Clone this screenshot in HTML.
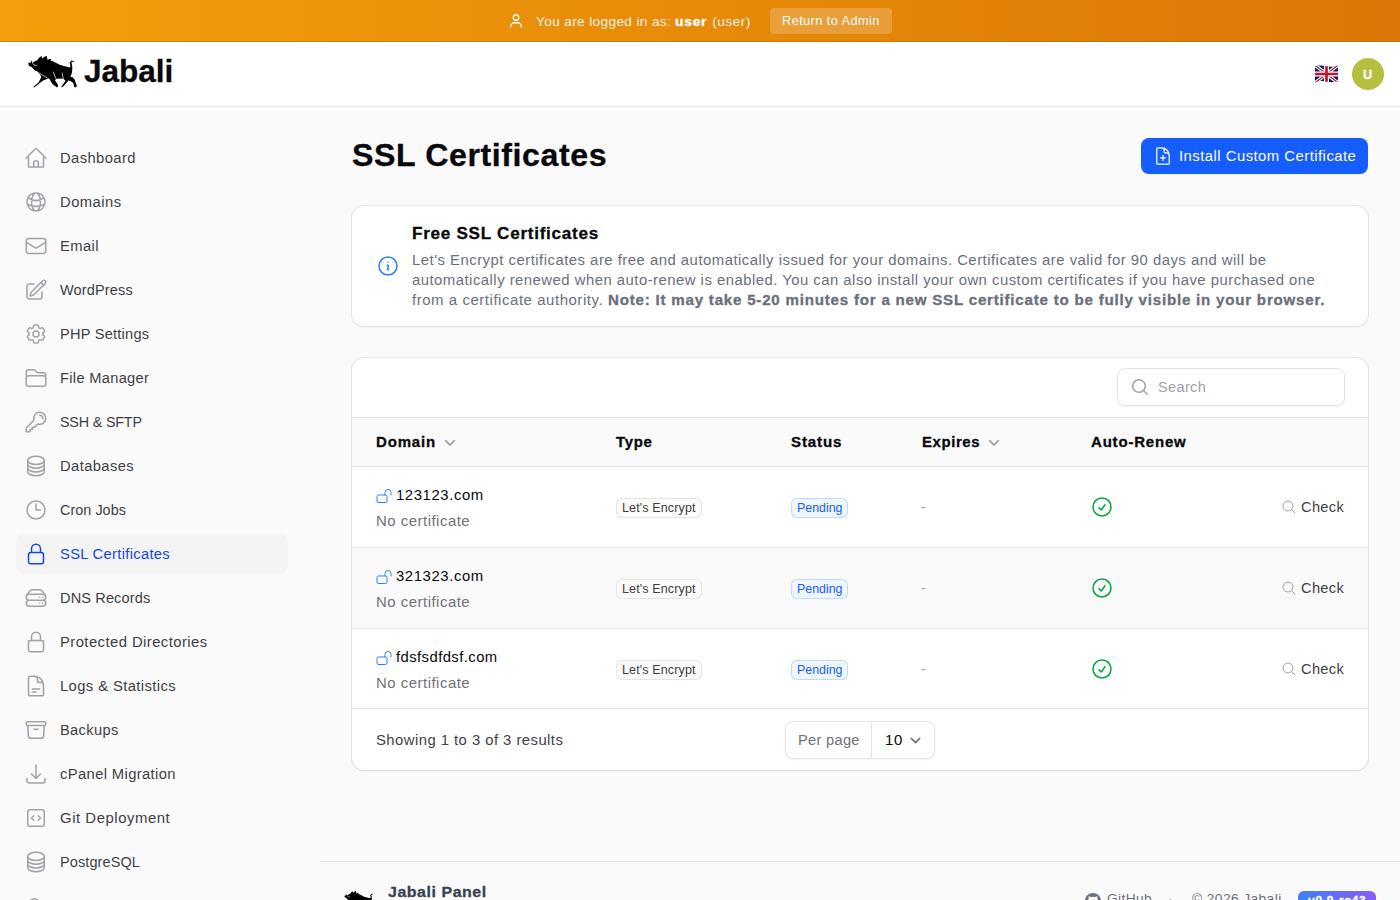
<!DOCTYPE html>
<html><head><meta charset="utf-8"><title>SSL Certificates - Jabali</title>
<style>
*{box-sizing:border-box;margin:0;padding:0}
html,body{width:1400px;height:900px;overflow:hidden}
body{font-family:"Liberation Sans",sans-serif;background:#fafafa;position:relative;color:#09090b;font-size:14px;line-height:20px}
.a{position:absolute;white-space:nowrap}
.tx{white-space:pre;display:inline-block;transform-origin:0 0}
[style*="font-weight:bold"] .tx,.tx[style*="font-weight:bold"]{-webkit-text-stroke:0.3px currentColor}
svg.i{position:absolute;fill:none;stroke:currentColor;stroke-width:1.5;stroke-linecap:round;stroke-linejoin:round}
</style></head>
<body>
<div class="a" style="left:0;top:0;width:1400px;height:42px;background:linear-gradient(90deg,#f59e0b 0%,#d97706 100%);border-bottom:1px solid rgba(180,83,9,.35)">
<svg class="i" viewBox="0 0 16 16" style="left:508px;top:12px;width:16px;height:16px;color:#fff;stroke-width:1.3"><circle cx="8" cy="5.5" r="2.75"/><path d="M2.65 15.25V14.5a3.75 3.75 0 0 1 3.75-3.75h3.2a3.75 3.75 0 0 1 3.75 3.75V15.25"/></svg>
<div class="a" style="left:536px;top:11px;line-height:20px;color:rgba(255,255,255,.92)"><span class="tx" style="font-size:13.39px;letter-spacing:0.326px;transform:scaleX(1.024);margin-right:3.32px">You are logged in as: </span><span class="tx" style="font-size:13.39px;letter-spacing:0.666px;transform:scaleX(1.042);margin-right:1.30px;font-weight:bold;color:#fff">user</span><span class="tx" style="font-size:13.39px;letter-spacing:0.386px;transform:scaleX(1.031);margin-right:1.28px"> (user)</span></div>
<div class="a" style="left:770px;top:8px;width:122px;height:26px;border-radius:4px;background:rgba(255,255,255,.2);color:#fff;line-height:24px;text-align:center"><span class="tx" style="font-size:12.36px;letter-spacing:0.413px;transform:scaleX(1.031);margin-right:2.93px">Return to Admin</span></div>
</div>
<div class="a" style="left:0;top:42px;width:1400px;height:65px;background:#fff;border-bottom:1px solid #e4e4e7">
<svg viewBox="26 54 52 36" style="position:absolute;left:26px;top:12px;width:52px;height:36px"><path fill="#000" d="M28.2 63.1 L31.0 62.5 L31.3 59.9 L32.2 62.2 L33.3 61.9 L37.3 60.2 L39.1 57.8 L41.6 56.0 L42.4 58.7 L43.6 57.2 L46.7 55.8 L47.3 58.6 L47.6 60.2 L48.9 59.0 L51.3 59.2 L50.6 60.6 L53.3 61.4 L57.8 63.8 L59.6 64.7 L69.3 67.4 L70.6 66.2 L69.6 63.0 L71.4 60.6 L74.8 61.4 L71.4 62.2 L72.3 66.6 L72.2 70.7 L71.8 73.3 L70.4 76.9 L72.4 76.9 L74.7 79.6 L75.8 83.1 L76.9 85.8 L75.6 87.6 L74.2 87.1 L73.3 83.1 L70.2 80.9 L68.4 80.4 L64.0 85.8 L61.8 87.6 L61.3 86.7 L64.9 81.8 L65.3 80.4 L63.1 78.4 L56.0 78.7 L55.1 80.4 L57.8 84.4 L58.2 86.2 L57.1 87.6 L52.4 84.0 L49.8 79.6 L48.9 78.2 L43.1 80.4 L37.3 84.9 L34.2 87.6 L33.3 87.1 L38.7 82.2 L41.3 76.9 L40.4 75.1 L36.9 71.6 L35.1 70.7 L31.6 67.1 L28.9 65.8 Z"/><path fill="none" stroke="#fff" stroke-width="0.7" stroke-linecap="round" d="M32.4 62.4 Q33.2 66.2 36.9 65.3 M36.0 71.1 L41.8 74.7 L47.1 77.8 M53.3 72 L55.6 78.2 M62.2 72.9 L63.1 78.2"/></svg>
<div class="a" style="left:84px;top:10px;line-height:40px;font-weight:bold;color:#09090b"><span class="tx" style="font-size:30.90px;letter-spacing:-0.051px;transform:scaleX(1.022);margin-right:1.93px">Jabali</span></div>
<svg class="a" viewBox="0 0 60 46" style="left:1315px;top:23px;width:23px;height:18px"><defs><clipPath id="fc"><path d="M0 4C8 0 16 -1 26 2S46 5 60 1V41C52 45 42 46 32 43S12 40 0 45Z"/></clipPath></defs><g clip-path="url(#fc)"><rect width="60" height="46" fill="#012169"/><path d="M0 0L60 46M60 0L0 46" stroke="#fff" stroke-width="9"/><path d="M0 0L60 46M60 0L0 46" stroke="#C8102E" stroke-width="3"/><path d="M30 0v46M0 23h60" stroke="#fff" stroke-width="13"/><path d="M30 0v46M0 23h60" stroke="#C8102E" stroke-width="7"/></g></svg>
<div class="a" style="left:1352px;top:16px;width:32px;height:32px;border-radius:50%;background:#b5c040;color:#fff;font-weight:bold;line-height:32px;text-align:center"><span class="tx" style="font-size:12.36px;letter-spacing:0.554px;transform:scaleX(1.027);margin-right:0.26px">U</span></div>
</div>
<div class="a" style="left:16px;top:534px;width:272px;height:40px;border-radius:8px;background:#f4f4f5"></div>
<svg class="i" viewBox="0 0 24 24" style="left:24px;top:146px;width:24px;height:24px;color:#a1a1aa"><path d="m2.25 12 8.954-8.955c.44-.439 1.152-.439 1.591 0L21.75 12M4.5 9.75v10.125c0 .621.504 1.125 1.125 1.125H9.75v-4.875c0-.621.504-1.125 1.125-1.125h2.25c.621 0 1.125.504 1.125 1.125V21h4.125c.621 0 1.125-.504 1.125-1.125V9.75M8.25 21h8.25"/></svg>
<div class="a" style="left:60px;top:148px;line-height:20px;color:#3f3f46"><span class="tx" style="font-size:14.42px;letter-spacing:0.417px;transform:scaleX(1.023);margin-right:1.73px">Dashboard</span></div>
<svg class="i" viewBox="0 0 24 24" style="left:24px;top:190px;width:24px;height:24px;color:#a1a1aa"><path d="M12 21a9.004 9.004 0 0 0 8.716-6.747M12 21a9.004 9.004 0 0 1-8.716-6.747M12 21c2.485 0 4.5-4.03 4.5-9S14.485 3 12 3m0 18c-2.485 0-4.5-4.03-4.5-9S9.515 3 12 3m0 0a8.997 8.997 0 0 1 7.843 4.582M12 3a8.997 8.997 0 0 0-7.843 4.582m15.686 0A11.953 11.953 0 0 1 12 10.5c-2.998 0-5.74-1.1-7.843-2.918m15.686 0A8.959 8.959 0 0 1 21 12c0 .778-.099 1.533-.284 2.253m0 0A17.919 17.919 0 0 1 12 16.5c-3.162 0-6.133-.815-8.716-2.247m0 0A9.015 9.015 0 0 1 3 12c0-1.605.42-3.113 1.157-4.418"/></svg>
<div class="a" style="left:60px;top:192px;line-height:20px;color:#3f3f46"><span class="tx" style="font-size:14.42px;letter-spacing:0.465px;transform:scaleX(1.025);margin-right:1.51px">Domains</span></div>
<svg class="i" viewBox="0 0 24 24" style="left:24px;top:234px;width:24px;height:24px;color:#a1a1aa"><path d="M21.75 6.75v10.5a2.25 2.25 0 0 1-2.25 2.25h-15a2.25 2.25 0 0 1-2.25-2.25V6.75m19.5 0A2.25 2.25 0 0 0 19.5 4.5h-15a2.25 2.25 0 0 0-2.25 2.25m19.5 0v.243a2.25 2.25 0 0 1-1.07 1.916l-7.5 4.615a2.25 2.25 0 0 1-2.36 0L3.32 8.91a2.25 2.25 0 0 1-1.07-1.916V6.75"/></svg>
<div class="a" style="left:60px;top:236px;line-height:20px;color:#3f3f46"><span class="tx" style="font-size:14.42px;letter-spacing:0.385px;transform:scaleX(1.023);margin-right:0.89px">Email</span></div>
<svg class="i" viewBox="0 0 24 24" style="left:24px;top:278px;width:24px;height:24px;color:#a1a1aa"><path d="m16.862 4.487 1.687-1.688a1.875 1.875 0 1 1 2.652 2.652L10.582 16.07a4.5 4.5 0 0 1-1.897 1.13L6 18l.8-2.685a4.5 4.5 0 0 1 1.13-1.897l8.932-8.931Zm0 0L19.5 7.125M18 14v4.75A2.25 2.25 0 0 1 15.75 21H5.25A2.25 2.25 0 0 1 3 18.75V8.25A2.25 2.25 0 0 1 5.25 6H10"/></svg>
<div class="a" style="left:60px;top:280px;line-height:20px;color:#3f3f46"><span class="tx" style="font-size:14.42px;letter-spacing:0.143px;transform:scaleX(1.008);margin-right:0.57px">WordPress</span></div>
<svg class="i" viewBox="0 0 24 24" style="left:24px;top:322px;width:24px;height:24px;color:#a1a1aa"><path d="M9.594 3.94c.09-.542.56-.94 1.11-.94h2.593c.55 0 1.02.398 1.11.94l.213 1.281c.063.374.313.686.645.87.074.04.147.083.22.127.325.196.72.257 1.075.124l1.217-.456a1.125 1.125 0 0 1 1.37.49l1.296 2.247a1.125 1.125 0 0 1-.26 1.431l-1.003.827c-.293.241-.438.613-.43.992a7.723 7.723 0 0 1 0 .255c-.008.378.137.75.43.991l1.004.827c.424.35.534.955.26 1.43l-1.298 2.247a1.125 1.125 0 0 1-1.369.491l-1.217-.456c-.355-.133-.75-.072-1.076.124a6.47 6.47 0 0 1-.22.128c-.331.183-.581.495-.644.869l-.213 1.281c-.09.543-.56.94-1.11.94h-2.594c-.55 0-1.019-.398-1.11-.94l-.213-1.281c-.062-.374-.312-.686-.644-.87a6.52 6.52 0 0 1-.22-.127c-.325-.196-.72-.257-1.076-.124l-1.217.456a1.125 1.125 0 0 1-1.369-.49l-1.297-2.247a1.125 1.125 0 0 1 .26-1.431l1.004-.827c.292-.24.437-.613.43-.991a6.932 6.932 0 0 1 0-.255c.007-.38-.138-.751-.43-.992l-1.004-.827a1.125 1.125 0 0 1-.26-1.43l1.297-2.247a1.125 1.125 0 0 1 1.37-.491l1.216.456c.356.133.751.072 1.076-.124.072-.044.146-.086.22-.128.332-.183.582-.495.644-.869l.214-1.28Z"/><path d="M15 12a3 3 0 1 1-6 0 3 3 0 0 1 6 0Z"/></svg>
<div class="a" style="left:60px;top:324px;line-height:20px;color:#3f3f46"><span class="tx" style="font-size:14.42px;letter-spacing:0.223px;transform:scaleX(1.014);margin-right:1.20px">PHP Settings</span></div>
<svg class="i" viewBox="0 0 24 24" style="left:24px;top:366px;width:24px;height:24px;color:#a1a1aa"><path d="M2.25 12.75V12A2.25 2.25 0 0 1 4.5 9.75h15A2.25 2.25 0 0 1 21.75 12v.75m-8.69-6.44-2.12-2.12a1.5 1.5 0 0 0-1.061-.44H4.5A2.25 2.25 0 0 0 2.25 6v12a2.25 2.25 0 0 0 2.25 2.25h15A2.25 2.25 0 0 0 21.75 18V9a2.25 2.25 0 0 0-2.25-2.25h-5.379a1.5 1.5 0 0 1-1.06-.44Z"/></svg>
<div class="a" style="left:60px;top:368px;line-height:20px;color:#3f3f46"><span class="tx" style="font-size:14.42px;letter-spacing:0.296px;transform:scaleX(1.018);margin-right:1.62px">File Manager</span></div>
<svg class="i" viewBox="0 0 24 24" style="left:24px;top:410px;width:24px;height:24px;color:#a1a1aa"><path d="M15.75 5.25a3 3 0 0 1 3 3m3 0a6 6 0 0 1-7.029 5.912c-.563-.097-1.159.026-1.563.43L10.5 17.25H8.25v2.25H6v2.25H2.25v-2.818c0-.597.237-1.17.659-1.591l6.499-6.499c.404-.404.527-1 .43-1.563A6 6 0 1 1 21.75 8.25Z"/></svg>
<div class="a" style="left:60px;top:412px;line-height:20px;color:#3f3f46"><span class="tx" style="font-size:14.42px;letter-spacing:-0.159px;transform:scaleX(0.992);margin-right:-0.66px">SSH &amp; SFTP</span></div>
<svg class="i" viewBox="0 0 24 24" style="left:24px;top:454px;width:24px;height:24px;color:#a1a1aa"><path d="M20.25 6.375c0 2.278-3.694 4.125-8.25 4.125S3.75 8.653 3.75 6.375m16.5 0c0-2.278-3.694-4.125-8.25-4.125S3.75 4.097 3.75 6.375m16.5 0v11.25c0 2.278-3.694 4.125-8.25 4.125s-8.25-1.847-8.25-4.125V6.375m16.5 0v3.75m-16.5-3.75v3.75m16.5 0v3.75C20.25 16.153 16.556 18 12 18s-8.25-1.847-8.25-4.125v-3.75m16.5 0c0 2.278-3.694 4.125-8.25 4.125s-8.25-1.847-8.25-4.125"/></svg>
<div class="a" style="left:60px;top:456px;line-height:20px;color:#3f3f46"><span class="tx" style="font-size:14.42px;letter-spacing:0.398px;transform:scaleX(1.023);margin-right:1.65px">Databases</span></div>
<svg class="i" viewBox="0 0 24 24" style="left:24px;top:498px;width:24px;height:24px;color:#a1a1aa"><path d="M12 6v6h4.5m4.5 0a9 9 0 1 1-18 0 9 9 0 0 1 18 0Z"/></svg>
<div class="a" style="left:60px;top:500px;line-height:20px;color:#3f3f46"><span class="tx" style="font-size:14.42px;letter-spacing:0.025px;transform:scaleX(1.001);margin-right:0.10px">Cron Jobs</span></div>
<svg class="i" viewBox="0 0 24 24" style="left:24px;top:542px;width:24px;height:24px;color:#1447e6"><path d="M16.5 10.5V6.75a4.5 4.5 0 1 0-9 0v3.75m-.75 11.25h10.5a2.25 2.25 0 0 0 2.25-2.25v-6.75a2.25 2.25 0 0 0-2.25-2.25H6.75a2.25 2.25 0 0 0-2.25 2.25v6.75a2.25 2.25 0 0 0 2.25 2.25Z"/></svg>
<div class="a" style="left:60px;top:544px;line-height:20px;color:#1447e6"><span class="tx" style="font-size:14.42px;letter-spacing:0.313px;transform:scaleX(1.021);margin-right:2.30px">SSL Certificates</span></div>
<svg class="i" viewBox="0 0 24 24" style="left:24px;top:586px;width:24px;height:24px;color:#a1a1aa"><path d="M5.25 14.25h13.5m-13.5 0a3 3 0 0 1-3-3m3 3a3 3 0 1 0 0 6h13.5a3 3 0 1 0 0-6m-16.5-3a3 3 0 0 1 3-3h13.5a3 3 0 0 1 3 3m-19.5 0a4.5 4.5 0 0 1 .9-2.7L5.737 5.1a3.375 3.375 0 0 1 2.7-1.35h7.126c1.062 0 2.062.5 2.7 1.35l2.587 3.45a4.5 4.5 0 0 1 .9 2.7m0 0a3 3 0 0 1-3 3m0 3h.008v.008h-.008v-.008Zm0-6h.008v.008h-.008v-.008Zm-3 6h.008v.008h-.008v-.008Zm0-6h.008v.008h-.008v-.008Z"/></svg>
<div class="a" style="left:60px;top:588px;line-height:20px;color:#3f3f46"><span class="tx" style="font-size:14.42px;letter-spacing:0.139px;transform:scaleX(1.008);margin-right:0.67px">DNS Records</span></div>
<svg class="i" viewBox="0 0 24 24" style="left:24px;top:630px;width:24px;height:24px;color:#a1a1aa"><path d="M16.5 10.5V6.75a4.5 4.5 0 1 0-9 0v3.75m-.75 11.25h10.5a2.25 2.25 0 0 0 2.25-2.25v-6.75a2.25 2.25 0 0 0-2.25-2.25H6.75a2.25 2.25 0 0 0-2.25 2.25v6.75a2.25 2.25 0 0 0 2.25 2.25Z"/></svg>
<div class="a" style="left:60px;top:632px;line-height:20px;color:#3f3f46"><span class="tx" style="font-size:14.42px;letter-spacing:0.421px;transform:scaleX(1.029);margin-right:4.15px">Protected Directories</span></div>
<svg class="i" viewBox="0 0 24 24" style="left:24px;top:674px;width:24px;height:24px;color:#a1a1aa"><path d="M19.5 14.25v-2.625a3.375 3.375 0 0 0-3.375-3.375h-1.5A1.125 1.125 0 0 1 13.5 7.125v-1.5a3.375 3.375 0 0 0-3.375-3.375H8.25m0 12.75h7.5m-7.5 3H12M10.5 2.25H5.625c-.621 0-1.125.504-1.125 1.125v17.25c0 .621.504 1.125 1.125 1.125h12.75c.621 0 1.125-.504 1.125-1.125V11.25a9 9 0 0 0-9-9Z"/></svg>
<div class="a" style="left:60px;top:676px;line-height:20px;color:#3f3f46"><span class="tx" style="font-size:14.42px;letter-spacing:0.386px;transform:scaleX(1.027);margin-right:3.07px">Logs &amp; Statistics</span></div>
<svg class="i" viewBox="0 0 24 24" style="left:24px;top:718px;width:24px;height:24px;color:#a1a1aa"><path d="m20.25 7.5-.625 10.632a2.25 2.25 0 0 1-2.247 2.118H6.622a2.25 2.25 0 0 1-2.247-2.118L3.75 7.5M10 11.25h4M3.375 7.5h17.25c.621 0 1.125-.504 1.125-1.125v-1.5c0-.621-.504-1.125-1.125-1.125H3.375c-.621 0-1.125.504-1.125 1.125v1.5c0 .621.504 1.125 1.125 1.125Z"/></svg>
<div class="a" style="left:60px;top:720px;line-height:20px;color:#3f3f46"><span class="tx" style="font-size:14.42px;letter-spacing:0.330px;transform:scaleX(1.018);margin-right:1.05px">Backups</span></div>
<svg class="i" viewBox="0 0 24 24" style="left:24px;top:762px;width:24px;height:24px;color:#a1a1aa"><path d="M3 16.5v2.25A2.25 2.25 0 0 0 5.25 21h13.5A2.25 2.25 0 0 0 21 18.75V16.5M16.5 12 12 16.5m0 0L7.5 12m4.5 4.5V3"/></svg>
<div class="a" style="left:60px;top:764px;line-height:20px;color:#3f3f46"><span class="tx" style="font-size:14.42px;letter-spacing:0.368px;transform:scaleX(1.024);margin-right:2.73px">cPanel Migration</span></div>
<svg class="i" viewBox="0 0 24 24" style="left:24px;top:806px;width:24px;height:24px;color:#a1a1aa"><path d="M14.25 9.75 16.5 12l-2.25 2.25m-4.5 0L7.5 12l2.25-2.25M6 20.25h12A2.25 2.25 0 0 0 20.25 18V6A2.25 2.25 0 0 0 18 3.75H6A2.25 2.25 0 0 0 3.75 6v12A2.25 2.25 0 0 0 6 20.25Z"/></svg>
<div class="a" style="left:60px;top:808px;line-height:20px;color:#3f3f46"><span class="tx" style="font-size:14.42px;letter-spacing:0.533px;transform:scaleX(1.033);margin-right:3.55px">Git Deployment</span></div>
<svg class="i" viewBox="0 0 24 24" style="left:24px;top:850px;width:24px;height:24px;color:#a1a1aa"><path d="M20.25 6.375c0 2.278-3.694 4.125-8.25 4.125S3.75 8.653 3.75 6.375m16.5 0c0-2.278-3.694-4.125-8.25-4.125S3.75 4.097 3.75 6.375m16.5 0v11.25c0 2.278-3.694 4.125-8.25 4.125s-8.25-1.847-8.25-4.125V6.375m16.5 0v3.75m-16.5-3.75v3.75m16.5 0v3.75C20.25 16.153 16.556 18 12 18s-8.25-1.847-8.25-4.125v-3.75m16.5 0c0 2.278-3.694 4.125-8.25 4.125s-8.25-1.847-8.25-4.125"/></svg>
<div class="a" style="left:60px;top:852px;line-height:20px;color:#3f3f46"><span class="tx" style="font-size:14.42px;letter-spacing:0.102px;transform:scaleX(1.006);margin-right:0.45px">PostgreSQL</span></div>
<svg class="i" viewBox="0 0 24 24" style="left:24px;top:894px;width:24px;height:24px;color:#a1a1aa"><circle cx="10.3" cy="9.5" r="4.85"/></svg>
<div class="a" style="left:60px;top:896px;line-height:20px;color:#3f3f46"><span class="tx" style="font-size:14.42px;letter-spacing:0.455px;transform:scaleX(1.031);margin-right:1.72px">Settings</span></div>
<div class="a" style="left:352px;top:138px;line-height:36px;font-weight:bold;color:#09090b"><span class="tx" style="font-size:30.90px;letter-spacing:0.543px;transform:scaleX(1.041);margin-right:10.08px">SSL Certificates</span></div>
<div class="a" style="left:1141px;top:138px;width:227px;height:36px;border-radius:8px;background:#155dfc;box-shadow:0 1px 2px rgba(0,0,0,.05)"><svg class="i" viewBox="0 0 24 24" style="left:12px;top:8px;width:20px;height:20px;color:#fff"><path d="M19.5 14.25v-2.625a3.375 3.375 0 0 0-3.375-3.375h-1.5A1.125 1.125 0 0 1 13.5 7.125v-1.5a3.375 3.375 0 0 0-3.375-3.375H8.25m3.75 9v6m3-3H9m1.5-12H5.625c-.621 0-1.125.504-1.125 1.125v17.25c0 .621.504 1.125 1.125 1.125h12.75c.621 0 1.125-.504 1.125-1.125V11.25a9 9 0 0 0-9-9Z"/></svg><div class="a" style="left:38px;top:8px;line-height:20px;color:#fff"><span class="tx" style="font-size:14.42px;letter-spacing:0.451px;transform:scaleX(1.032);margin-right:5.56px">Install Custom Certificate</span></div></div>
<div class="a" style="left:352px;top:206px;width:1016px;height:120px;border-radius:12px;background:#fff;box-shadow:0 0 0 1px rgba(9,9,11,.07),0 1px 3px rgba(0,0,0,.06)">
<svg class="i" viewBox="0 0 24 24" style="left:24px;top:48px;width:24px;height:24px;color:#2b7fff"><path d="m11.25 11.25.041-.02a.75.75 0 0 1 1.063.852l-.708 2.836a.75.75 0 0 0 1.063.853l.041-.021M21 12a9 9 0 1 1-18 0 9 9 0 0 1 18 0Zm-9-3.75h.008v.008H12V8.25Z"/></svg>
<div class="a" style="left:60px;top:15px;line-height:24px;font-weight:bold;color:#09090b"><span class="tx" style="font-size:16.48px;letter-spacing:0.692px;transform:scaleX(1.039);margin-right:7.04px">Free SSL Certificates</span></div>
<div class="a" style="left:60px;top:44px;line-height:20px;color:#6b6f7c"><span class="tx" style="font-size:14.42px;letter-spacing:0.466px;transform:scaleX(1.034);margin-right:27.73px">Let's Encrypt certificates are free and automatically issued for your domains. Certificates are valid for 90 days and will be</span></div>
<div class="a" style="left:60px;top:64px;line-height:20px;color:#6b6f7c"><span class="tx" style="font-size:14.42px;letter-spacing:0.468px;transform:scaleX(1.032);margin-right:27.74px">automatically renewed when auto-renew is enabled. You can also install your own custom certificates if you have purchased one</span></div>
<div class="a" style="left:60px;top:84px;line-height:20px;color:#6b6f7c"><span class="tx" style="font-size:14.42px;letter-spacing:0.520px;transform:scaleX(1.040);margin-right:7.58px">from a certificate authority. </span><span class="tx" style="font-size:14.42px;letter-spacing:0.737px;transform:scaleX(1.050);margin-right:34.27px;font-weight:bold;color:#6b6f7c">Note: It may take 5-20 minutes for a new SSL certificate to be fully visible in your browser.</span></div>
</div>
<div class="a" style="left:352px;top:358px;width:1016px;height:412px;border-radius:12px;background:#fff;box-shadow:0 0 0 1px rgba(9,9,11,.07),0 1px 3px rgba(0,0,0,.06);overflow:hidden">
<div class="a" style="left:765px;top:10px;width:228px;height:38px;border-radius:8px;border:1px solid #e4e4e7;background:#fff;box-shadow:0 1px 2px rgba(0,0,0,.05)"><svg class="a" viewBox="0 0 20 20" style="left:12px;top:8px;width:20px;height:20px"><path fill="#a1a1aa" fill-rule="evenodd" d="M9 3.5a5.5 5.5 0 1 0 0 11 5.5 5.5 0 0 0 0-11ZM2 9a7 7 0 1 1 12.452 4.391l3.328 3.329a.75.75 0 1 1-1.06 1.06l-3.329-3.328A7 7 0 0 1 2 9Z"/></svg><div class="a" style="left:40px;top:8px;line-height:20px;color:#a1a1aa"><span class="tx" style="font-size:14.42px;letter-spacing:0.282px;transform:scaleX(1.016);margin-right:0.76px">Search</span></div></div>
<div class="a" style="left:0;top:59px;width:1016px;height:50px;background:#fafafa;border-top:1px solid #e4e4e7;border-bottom:1px solid #e4e4e7"></div>
<div class="a" style="left:24px;top:74px;line-height:20px;font-weight:bold;color:#09090b"><span class="tx" style="font-size:14.42px;letter-spacing:0.809px;transform:scaleX(1.041);margin-right:2.36px">Domain</span></div>
<svg class="a" viewBox="0 0 20 20" style="left:87.5px;top:74px;width:20px;height:20px"><path fill="#8b8f9c" d="M5.22 8.22a.75.75 0 0 1 1.06 0L10 11.94l3.72-3.72a.75.75 0 1 1 1.06 1.06l-4.25 4.25a.75.75 0 0 1-1.06 0L5.22 9.28a.75.75 0 0 1 0-1.06Z"/></svg>
<div class="a" style="left:264px;top:74px;line-height:20px;font-weight:bold;color:#09090b"><span class="tx" style="font-size:14.42px;letter-spacing:0.670px;transform:scaleX(1.037);margin-right:1.29px">Type</span></div>
<div class="a" style="left:439px;top:74px;line-height:20px;font-weight:bold;color:#09090b"><span class="tx" style="font-size:14.42px;letter-spacing:0.799px;transform:scaleX(1.049);margin-right:2.39px">Status</span></div>
<div class="a" style="left:570px;top:74px;line-height:20px;font-weight:bold;color:#09090b"><span class="tx" style="font-size:14.42px;letter-spacing:0.589px;transform:scaleX(1.035);margin-right:1.97px">Expires</span></div>
<svg class="a" viewBox="0 0 20 20" style="left:632px;top:74px;width:20px;height:20px"><path fill="#8b8f9c" d="M5.22 8.22a.75.75 0 0 1 1.06 0L10 11.94l3.72-3.72a.75.75 0 1 1 1.06 1.06l-4.25 4.25a.75.75 0 0 1-1.06 0L5.22 9.28a.75.75 0 0 1 0-1.06Z"/></svg>
<div class="a" style="left:739px;top:74px;line-height:20px;font-weight:bold;color:#09090b"><span class="tx" style="font-size:14.42px;letter-spacing:0.776px;transform:scaleX(1.041);margin-right:3.78px">Auto-Renew</span></div>
<svg class="i" viewBox="0 0 24 24" style="left:24px;top:130px;width:16px;height:16px;color:#2b7fff"><path d="M13.5 10.5V6.75a4.5 4.5 0 1 1 9 0v3.75M3.75 21.75h10.5a2.25 2.25 0 0 0 2.25-2.25v-6.75a2.25 2.25 0 0 0-2.25-2.25H3.75a2.25 2.25 0 0 0-2.25 2.25v6.75a2.25 2.25 0 0 0 2.25 2.25Z"/></svg>
<div class="a" style="left:44px;top:127px;line-height:20px;color:#09090b"><span class="tx" style="font-size:14.42px;letter-spacing:0.576px;transform:scaleX(1.032);margin-right:2.74px">123123.com</span></div>
<div class="a" style="left:24px;top:153px;line-height:20px;color:#71717a"><span class="tx" style="font-size:14.42px;letter-spacing:0.486px;transform:scaleX(1.036);margin-right:3.26px">No certificate</span></div>
<div class="a" style="left:264px;top:140px;width:86px;height:20px;border-radius:6px;background:#fafafa;box-shadow:inset 0 0 0 1px #e4e4e7;color:#3f3f46;text-align:center;line-height:18px"><span class="tx" style="font-size:12.36px;letter-spacing:0.134px;transform:scaleX(1.011);margin-right:0.77px">Let's Encrypt</span></div>
<div class="a" style="left:439px;top:140px;width:57px;height:20px;border-radius:6px;background:#eff6ff;box-shadow:inset 0 0 0 1px #bedbff;color:#155dfc;text-align:center;line-height:18px"><span class="tx" style="font-size:12.36px;letter-spacing:0.012px;transform:scaleX(1.001);margin-right:0.04px">Pending</span></div>
<div class="a" style="left:569px;top:139px;line-height:20px;color:#a1a1aa"><span class="tx" style="font-size:14.42px;letter-spacing:0.172px;transform:scaleX(1.016);margin-right:0.08px">-</span></div>
<svg class="i" viewBox="0 0 24 24" style="left:738px;top:137px;width:24px;height:24px;color:#00a63e"><path d="M9 12.75 11.25 15 15 9.75M21 12a9 9 0 1 1-18 0 9 9 0 0 1 18 0Z"/></svg>
<svg class="i" viewBox="0 0 24 24" style="left:929px;top:141px;width:16px;height:16px;color:#a1a1aa"><path d="m21 21-5.197-5.197m0 0A7.5 7.5 0 1 0 5.196 5.196a7.5 7.5 0 0 0 10.607 10.607Z"/></svg>
<div class="a" style="left:949px;top:139px;line-height:20px;color:#3f3f46"><span class="tx" style="font-size:14.42px;letter-spacing:0.308px;transform:scaleX(1.016);margin-right:0.70px">Check</span></div>
<div class="a" style="left:0;top:189px;width:1016px;height:1px;background:#e4e4e7"></div>
<div class="a" style="left:0;top:190px;width:1016px;height:80px;background:#fafafa"></div>
<svg class="i" viewBox="0 0 24 24" style="left:24px;top:211px;width:16px;height:16px;color:#2b7fff"><path d="M13.5 10.5V6.75a4.5 4.5 0 1 1 9 0v3.75M3.75 21.75h10.5a2.25 2.25 0 0 0 2.25-2.25v-6.75a2.25 2.25 0 0 0-2.25-2.25H3.75a2.25 2.25 0 0 0-2.25 2.25v6.75a2.25 2.25 0 0 0 2.25 2.25Z"/></svg>
<div class="a" style="left:44px;top:208px;line-height:20px;color:#09090b"><span class="tx" style="font-size:14.42px;letter-spacing:0.576px;transform:scaleX(1.032);margin-right:2.74px">321323.com</span></div>
<div class="a" style="left:24px;top:234px;line-height:20px;color:#71717a"><span class="tx" style="font-size:14.42px;letter-spacing:0.486px;transform:scaleX(1.036);margin-right:3.26px">No certificate</span></div>
<div class="a" style="left:264px;top:221px;width:86px;height:20px;border-radius:6px;background:#fafafa;box-shadow:inset 0 0 0 1px #e4e4e7;color:#3f3f46;text-align:center;line-height:18px"><span class="tx" style="font-size:12.36px;letter-spacing:0.134px;transform:scaleX(1.011);margin-right:0.77px">Let's Encrypt</span></div>
<div class="a" style="left:439px;top:221px;width:57px;height:20px;border-radius:6px;background:#eff6ff;box-shadow:inset 0 0 0 1px #bedbff;color:#155dfc;text-align:center;line-height:18px"><span class="tx" style="font-size:12.36px;letter-spacing:0.012px;transform:scaleX(1.001);margin-right:0.04px">Pending</span></div>
<div class="a" style="left:569px;top:220px;line-height:20px;color:#a1a1aa"><span class="tx" style="font-size:14.42px;letter-spacing:0.172px;transform:scaleX(1.016);margin-right:0.08px">-</span></div>
<svg class="i" viewBox="0 0 24 24" style="left:738px;top:218px;width:24px;height:24px;color:#00a63e"><path d="M9 12.75 11.25 15 15 9.75M21 12a9 9 0 1 1-18 0 9 9 0 0 1 18 0Z"/></svg>
<svg class="i" viewBox="0 0 24 24" style="left:929px;top:222px;width:16px;height:16px;color:#a1a1aa"><path d="m21 21-5.197-5.197m0 0A7.5 7.5 0 1 0 5.196 5.196a7.5 7.5 0 0 0 10.607 10.607Z"/></svg>
<div class="a" style="left:949px;top:220px;line-height:20px;color:#3f3f46"><span class="tx" style="font-size:14.42px;letter-spacing:0.308px;transform:scaleX(1.016);margin-right:0.70px">Check</span></div>
<div class="a" style="left:0;top:270px;width:1016px;height:1px;background:#e4e4e7"></div>
<svg class="i" viewBox="0 0 24 24" style="left:24px;top:292px;width:16px;height:16px;color:#2b7fff"><path d="M13.5 10.5V6.75a4.5 4.5 0 1 1 9 0v3.75M3.75 21.75h10.5a2.25 2.25 0 0 0 2.25-2.25v-6.75a2.25 2.25 0 0 0-2.25-2.25H3.75a2.25 2.25 0 0 0-2.25 2.25v6.75a2.25 2.25 0 0 0 2.25 2.25Z"/></svg>
<div class="a" style="left:44px;top:289px;line-height:20px;color:#09090b"><span class="tx" style="font-size:14.42px;letter-spacing:0.424px;transform:scaleX(1.028);margin-right:2.78px">fdsfsdfdsf.com</span></div>
<div class="a" style="left:24px;top:315px;line-height:20px;color:#71717a"><span class="tx" style="font-size:14.42px;letter-spacing:0.486px;transform:scaleX(1.036);margin-right:3.26px">No certificate</span></div>
<div class="a" style="left:264px;top:302px;width:86px;height:20px;border-radius:6px;background:#fafafa;box-shadow:inset 0 0 0 1px #e4e4e7;color:#3f3f46;text-align:center;line-height:18px"><span class="tx" style="font-size:12.36px;letter-spacing:0.134px;transform:scaleX(1.011);margin-right:0.77px">Let's Encrypt</span></div>
<div class="a" style="left:439px;top:302px;width:57px;height:20px;border-radius:6px;background:#eff6ff;box-shadow:inset 0 0 0 1px #bedbff;color:#155dfc;text-align:center;line-height:18px"><span class="tx" style="font-size:12.36px;letter-spacing:0.012px;transform:scaleX(1.001);margin-right:0.04px">Pending</span></div>
<div class="a" style="left:569px;top:301px;line-height:20px;color:#a1a1aa"><span class="tx" style="font-size:14.42px;letter-spacing:0.172px;transform:scaleX(1.016);margin-right:0.08px">-</span></div>
<svg class="i" viewBox="0 0 24 24" style="left:738px;top:299px;width:24px;height:24px;color:#00a63e"><path d="M9 12.75 11.25 15 15 9.75M21 12a9 9 0 1 1-18 0 9 9 0 0 1 18 0Z"/></svg>
<svg class="i" viewBox="0 0 24 24" style="left:929px;top:303px;width:16px;height:16px;color:#a1a1aa"><path d="m21 21-5.197-5.197m0 0A7.5 7.5 0 1 0 5.196 5.196a7.5 7.5 0 0 0 10.607 10.607Z"/></svg>
<div class="a" style="left:949px;top:301px;line-height:20px;color:#3f3f46"><span class="tx" style="font-size:14.42px;letter-spacing:0.308px;transform:scaleX(1.016);margin-right:0.70px">Check</span></div>
<div class="a" style="left:0;top:350px;width:1016px;height:1px;background:#e4e4e7"></div>
<div class="a" style="left:24px;top:372px;line-height:20px;color:#3f3f46"><span class="tx" style="font-size:14.42px;letter-spacing:0.441px;transform:scaleX(1.031);margin-right:5.63px">Showing 1 to 3 of 3 results</span></div>
<div class="a" style="left:433px;top:363px;width:150px;height:38px;border-radius:8px;border:1px solid #e4e4e7;background:#fff;box-shadow:0 1px 2px rgba(0,0,0,.05)"><div class="a" style="left:85px;top:0;width:1px;height:36px;background:#e4e4e7"></div><div class="a" style="left:12px;top:8px;line-height:20px;color:#71717a"><span class="tx" style="font-size:14.42px;letter-spacing:0.280px;transform:scaleX(1.017);margin-right:1.01px">Per page</span></div><div class="a" style="left:99px;top:8px;line-height:20px;color:#09090b"><span class="tx" style="font-size:14.42px;letter-spacing:0.608px;transform:scaleX(1.034);margin-right:0.58px">10</span></div><svg class="i" viewBox="0 0 20 20" style="left:119px;top:7.5px;width:21px;height:21px;color:#6b7280"><path d="M6 8l4 4 4-4"/></svg></div>
</div>
<div class="a" style="left:320px;top:861px;width:1080px;height:1px;background:#e4e4e7"></div>
<svg viewBox="26 54 52 36" style="position:absolute;left:342.75px;top:889.75px;width:32.4px;height:22.4px"><path fill="#000" d="M28.2 63.1 L31.0 62.5 L31.3 59.9 L32.2 62.2 L33.3 61.9 L37.3 60.2 L39.1 57.8 L41.6 56.0 L42.4 58.7 L43.6 57.2 L46.7 55.8 L47.3 58.6 L47.6 60.2 L48.9 59.0 L51.3 59.2 L50.6 60.6 L53.3 61.4 L57.8 63.8 L59.6 64.7 L69.3 67.4 L70.6 66.2 L69.6 63.0 L71.4 60.6 L74.8 61.4 L71.4 62.2 L72.3 66.6 L72.2 70.7 L71.8 73.3 L70.4 76.9 L72.4 76.9 L74.7 79.6 L75.8 83.1 L76.9 85.8 L75.6 87.6 L74.2 87.1 L73.3 83.1 L70.2 80.9 L68.4 80.4 L64.0 85.8 L61.8 87.6 L61.3 86.7 L64.9 81.8 L65.3 80.4 L63.1 78.4 L56.0 78.7 L55.1 80.4 L57.8 84.4 L58.2 86.2 L57.1 87.6 L52.4 84.0 L49.8 79.6 L48.9 78.2 L43.1 80.4 L37.3 84.9 L34.2 87.6 L33.3 87.1 L38.7 82.2 L41.3 76.9 L40.4 75.1 L36.9 71.6 L35.1 70.7 L31.6 67.1 L28.9 65.8 Z"/><path fill="none" stroke="#fff" stroke-width="0.7" stroke-linecap="round" d="M32.4 62.4 Q33.2 66.2 36.9 65.3 M36.0 71.1 L41.8 74.7 L47.1 77.8 M53.3 72 L55.6 78.2 M62.2 72.9 L63.1 78.2"/></svg>
<div class="a" style="left:388px;top:882px;line-height:20px;font-weight:bold;color:#364153"><span class="tx" style="font-size:15.45px;letter-spacing:0.539px;transform:scaleX(1.032);margin-right:3.07px">Jabali Panel</span></div>
<svg class="a" viewBox="0 0 16 16" style="left:1085px;top:893px;width:16px;height:16px"><path fill="#6a7282" d="M8 0C3.58 0 0 3.58 0 8c0 3.54 2.29 6.53 5.47 7.59.4.07.55-.17.55-.38 0-.19-.01-.82-.01-1.49-2.01.37-2.530-.49-2.69-.94-.09-.23-.48-.94-.82-1.13-.28-.15-.68-.52-.01-.53.63-.01 1.08.58 1.23.82.72 1.21 1.87.87 2.33.66.07-.52.28-.87.51-1.07-1.78-.2-3.64-.89-3.640-3.95 0-.87.31-1.59.82-2.15-.08-.2-.36-1.02.08-2.12 0 0 .67-.21 2.2.82.64-.18 1.32-.27 2-.27.68 0 1.36.09 2 .27 1.53-1.04 2.2-.82 2.2-.82.44 1.1.16 1.92.08 2.12.51.56.82 1.27.82 2.15 0 3.07-1.87 3.75-3.65 3.95.29.25.54.73.54 1.48 0 1.07-.01 1.93-.01 2.2 0 .21.15.46.55.38A8.013 8.013 0 0 0 16 8c0-4.42-3.58-8-8-8z"/></svg>
<div class="a" style="left:1107px;top:888px;line-height:20px;color:#6b6f7c"><span class="tx" style="font-size:13.39px;letter-spacing:0.390px;transform:scaleX(1.025);margin-right:1.08px">GitHub</span></div>
<div class="a" style="left:1168px;top:888px;line-height:20px;color:#99a1af"><span class="tx" style="font-size:13.39px;letter-spacing:-0.235px;transform:scaleX(0.978);margin-right:-0.09px">&middot;</span></div>
<div class="a" style="left:1192px;top:888px;line-height:20px;color:#6b6f7c"><span class="tx" style="font-size:13.39px;letter-spacing:0.398px;transform:scaleX(1.028);margin-right:2.42px">&copy; 2026 Jabali</span></div>
<div class="a" style="left:1298px;top:891px;width:78px;height:22px;border-radius:6px;background:linear-gradient(90deg,#3b82f6,#8b5cf6);box-shadow:0 0 0 1px #fff;color:#fff;font-weight:bold;line-height:13px;padding-top:2px;text-align:center"><span class="tx" style="font-size:11.33px;letter-spacing:0.688px;transform:scaleX(1.057);margin-right:3.16px">v0.9-rc43</span></div>
</body></html>
